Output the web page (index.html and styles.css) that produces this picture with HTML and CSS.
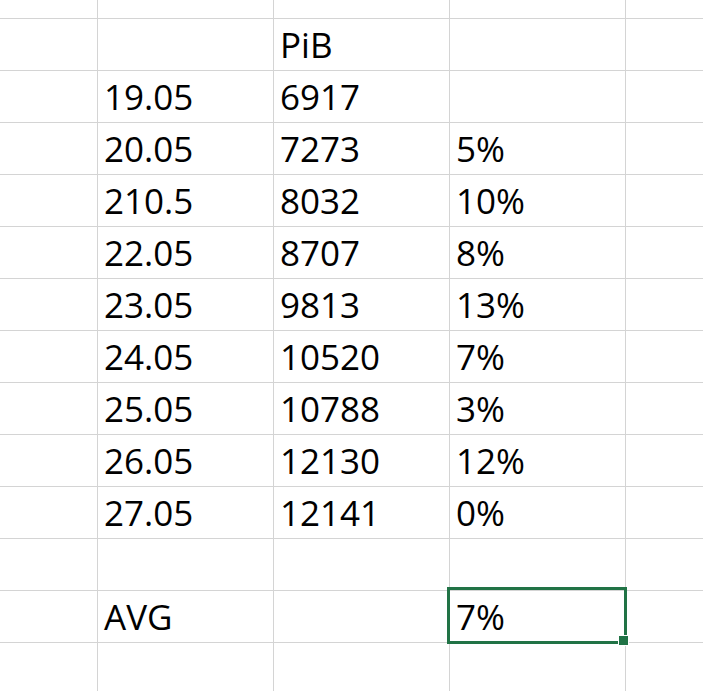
FILE: index.html
```html
<!DOCTYPE html>
<html lang="en">
<head>
    <meta charset="UTF-8">
    <meta name="viewport" content="width=device-width, initial-scale=1.0">
    <title>PiB</title>
    <link rel="stylesheet" href="styles.css">
</head>
<body>
    <div class="sheet">
        <!-- partial top row -->
        <div class="cell top"></div><div class="cell top"></div><div class="cell top"></div><div class="cell top"></div><div class="cell top"></div>

        <div class="cell"></div><div class="cell"></div><div class="cell">PiB</div><div class="cell"></div><div class="cell"></div>
        <div class="cell"></div><div class="cell">19.05</div><div class="cell">6917</div><div class="cell"></div><div class="cell"></div>
        <div class="cell"></div><div class="cell">20.05</div><div class="cell">7273</div><div class="cell">5%</div><div class="cell"></div>
        <div class="cell"></div><div class="cell">210.5</div><div class="cell">8032</div><div class="cell">10%</div><div class="cell"></div>
        <div class="cell"></div><div class="cell">22.05</div><div class="cell">8707</div><div class="cell">8%</div><div class="cell"></div>
        <div class="cell"></div><div class="cell">23.05</div><div class="cell">9813</div><div class="cell">13%</div><div class="cell"></div>
        <div class="cell"></div><div class="cell">24.05</div><div class="cell">10520</div><div class="cell">7%</div><div class="cell"></div>
        <div class="cell"></div><div class="cell">25.05</div><div class="cell">10788</div><div class="cell">3%</div><div class="cell"></div>
        <div class="cell"></div><div class="cell">26.05</div><div class="cell">12130</div><div class="cell">12%</div><div class="cell"></div>
        <div class="cell"></div><div class="cell">27.05</div><div class="cell">12141</div><div class="cell">0%</div><div class="cell"></div>
        <div class="cell"></div><div class="cell"></div><div class="cell"></div><div class="cell"></div><div class="cell"></div>
        <div class="cell"></div><div class="cell">AVG</div><div class="cell"></div>
        <div class="cell active">7%<span class="selection"><span class="handle"></span></span></div>
        <div class="cell"></div>
        <div class="cell"></div><div class="cell"></div><div class="cell"></div><div class="cell"></div><div class="cell"></div>
    </div>
</body>
</html>
```

FILE: styles.css
```css
:root {
    --grid-color: #d4d4d4;
    --select-color: #217346;
}

body {
    margin: 0;
    padding: 0;
    background: #ffffff;
    overflow: hidden;
    font-family: 'Open Sans', 'Noto Sans', sans-serif;
    color: #000;
}

.sheet {
    display: grid;
    grid-template-columns: 98px repeat(3, 176px) 1fr;
    grid-template-rows: 19px;
    grid-auto-rows: 52px;
    height: 100vh;
    overflow: hidden;
}

.cell {
    box-sizing: border-box;
    border-right: 1px solid var(--grid-color);
    border-bottom: 1px solid var(--grid-color);
    padding: 1px 0 0 6px;
    font-size: 35px;
    line-height: 50px;
    white-space: nowrap;
    overflow: hidden;
}

.cell:nth-child(5n) {
    border-right: none;
}

.cell.top {
    padding: 0;
    line-height: normal;
}

.cell.active {
    position: relative;
    overflow: visible;
}

.selection {
    position: absolute;
    top: -4px;
    left: -3px;
    right: -2px;
    bottom: -2px;
    border: 3px solid var(--select-color);
}

.handle {
    position: absolute;
    right: -5px;
    bottom: -5px;
    width: 9px;
    height: 9px;
    background: var(--select-color);
    border: 1px solid #ffffff;
}
```
